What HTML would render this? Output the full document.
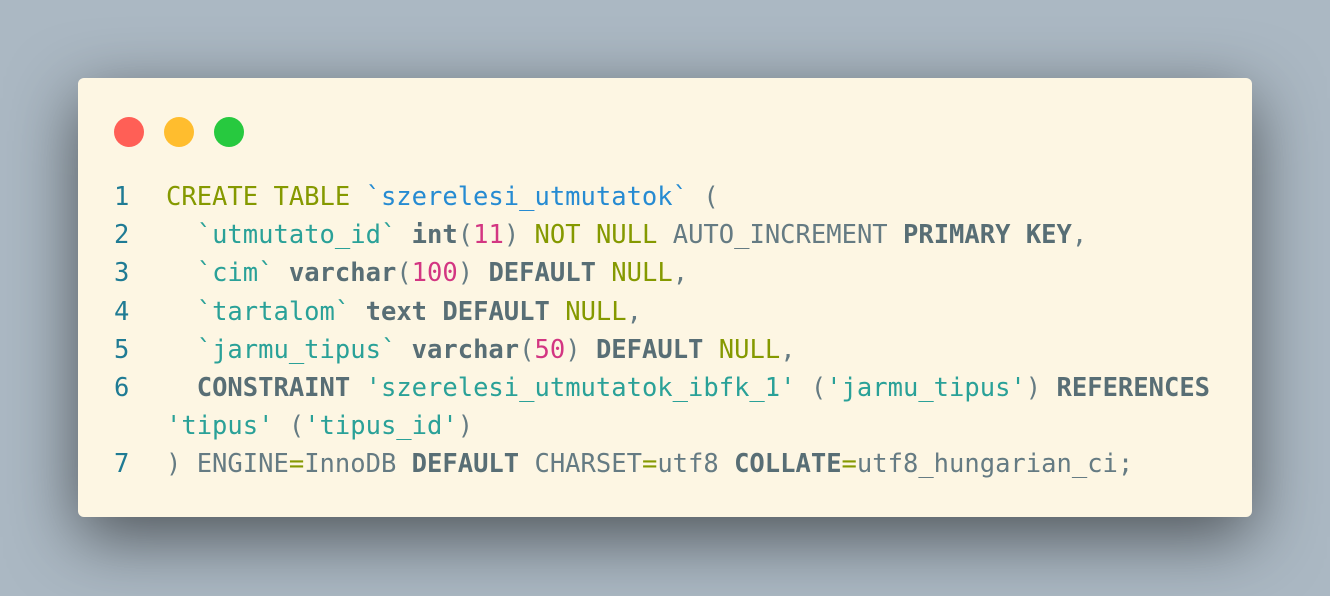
<!DOCTYPE html>
<html><head><meta charset="utf-8"><style>
html,body{margin:0;padding:0}
body{width:1330px;height:596px;background:#abb8c3;position:relative;overflow:hidden}
.card{position:absolute;left:78px;top:78px;width:1174px;height:439px;background:#fdf6e3;border-radius:6px;box-shadow:0 20px 68px rgba(0,0,0,0.55)}
.dot{position:absolute;top:39px;width:30px;height:30px;border-radius:50%}
.code{position:absolute;left:0;top:100px;font-family:"DejaVu Sans Mono","Liberation Mono",monospace;font-size:25.5px;line-height:38.2px;color:#657b83;white-space:pre}
.ln{position:absolute;left:36px;width:30px;color:#1f7b94}
.l{position:absolute;left:88px}
.k{color:#859900}.b{color:#268bd2}.c{color:#2aa198}.m{color:#d33682}.s{color:#586e75;font-weight:bold}
</style></head><body>
<div class="card">
<div class="dot" style="left:36px;background:#ff5f56"></div>
<div class="dot" style="left:86px;background:#ffbd2e"></div>
<div class="dot" style="left:136px;background:#27c93f"></div>
<div class="code">
<div class="ln" style="top:0">1</div><div class="l" style="top:0"><span class="k">CREATE TABLE</span> <span class="b">`szerelesi_utmutatok`</span> (</div>
<div class="ln" style="top:38.2px">2</div><div class="l" style="top:38.2px">  <span class="c">`utmutato_id`</span> <span class="s">int</span>(<span class="m">11</span>) <span class="k">NOT NULL</span> AUTO_INCREMENT <span class="s">PRIMARY KEY</span>,</div>
<div class="ln" style="top:76.4px">3</div><div class="l" style="top:76.4px">  <span class="c">`cim`</span> <span class="s">varchar</span>(<span class="m">100</span>) <span class="s">DEFAULT</span> <span class="k">NULL</span>,</div>
<div class="ln" style="top:114.6px">4</div><div class="l" style="top:114.6px">  <span class="c">`tartalom`</span> <span class="s">text</span> <span class="s">DEFAULT</span> <span class="k">NULL</span>,</div>
<div class="ln" style="top:152.8px">5</div><div class="l" style="top:152.8px">  <span class="c">`jarmu_tipus`</span> <span class="s">varchar</span>(<span class="m">50</span>) <span class="s">DEFAULT</span> <span class="k">NULL</span>,</div>
<div class="ln" style="top:191px">6</div><div class="l" style="top:191px">  <span class="s">CONSTRAINT</span> <span class="c">'szerelesi_utmutatok_ibfk_1'</span> (<span class="c">'jarmu_tipus'</span>) <span class="s">REFERENCES</span></div>
<div class="l" style="top:229.2px"><span class="c">'tipus'</span> (<span class="c">'tipus_id'</span>)</div>
<div class="ln" style="top:267.4px">7</div><div class="l" style="top:267.4px">) ENGINE<span class="k">=</span>InnoDB <span class="s">DEFAULT</span> CHARSET<span class="k">=</span>utf8 <span class="s">COLLATE</span><span class="k">=</span>utf8_hungarian_ci;</div>
</div>
</div>
</body></html>
